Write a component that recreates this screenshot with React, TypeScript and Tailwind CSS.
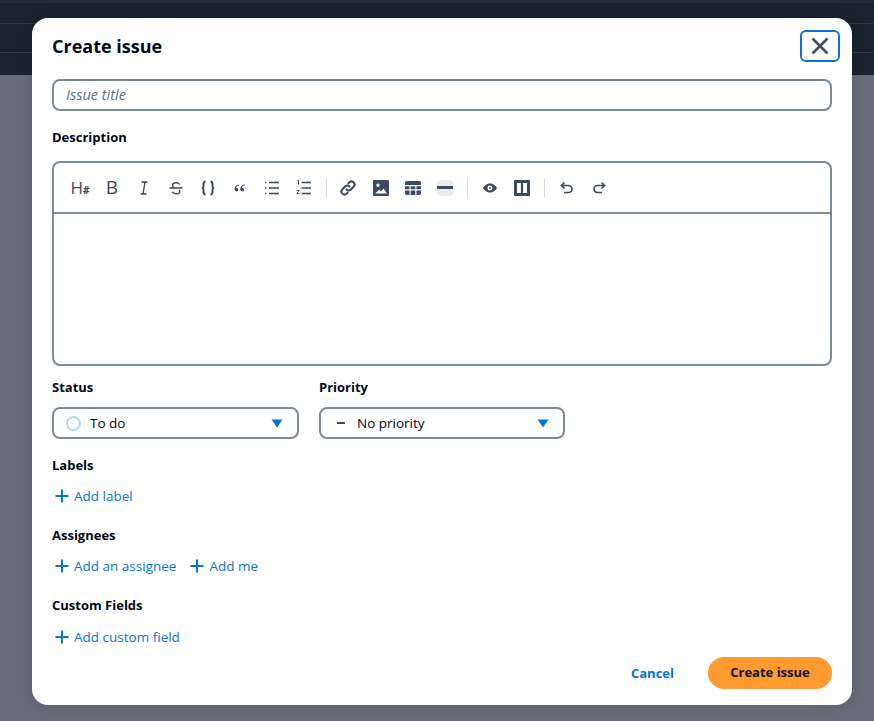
import { FC, ReactNode } from "react";

const Ic: FC<{ children: ReactNode; fill?: boolean }> = ({ children, fill }) => (
  <svg
    width="18"
    height="18"
    viewBox="0 0 18 18"
    fill={fill ? "#3b4a5c" : "none"}
    stroke={fill ? "none" : "#3b4a5c"}
    strokeWidth="1.4"
    className="shrink-0"
  >
    {children}
  </svg>
);

const Sep = () => <div className="mx-[6px] h-5 w-px shrink-0 bg-[#d5dbdb]" />;

const Btn: FC<{ children: ReactNode }> = ({ children }) => (
  <div className="flex h-[18px] w-8 items-center justify-center">{children}</div>
);

const Plus = () => (
  <svg width="16" height="16" viewBox="0 0 16 16" fill="none" stroke="#0972d3" strokeWidth="2" className="shrink-0">
    <path d="M1.500 8h13M8 1.500v13" />
  </svg>
);

const AddLink: FC<{ label: string }> = ({ label }) => (
  <span className="flex items-center gap-1 text-[13.5px] text-[#0972d3]">
    <Plus />
    {label}
  </span>
);

const Caret = () => (
  <svg width="12" height="9" viewBox="0 0 12 9" fill="#0972d3" className="shrink-0">
    <path d="M0.5 0.5h11L6 8.5z" />
  </svg>
);

const Field: FC<{ label: string; className?: string; children: ReactNode }> = ({ label, className, children }) => (
  <div className={className}>
    <div className="h-[18px] text-[13px] leading-[18px] font-bold text-[#000716]">{label}</div>
    {children}
  </div>
);

export default function App() {
  return (
    <div className="relative h-[721px] w-[874px] overflow-hidden bg-[#676d78] font-['Open_Sans','Noto_Sans',sans-serif]">
      <div className="h-[75px] border-t-[3px] border-[#232f3e] bg-[#19232f]">
        <div className="h-[21px] border-b border-[#2f3a47]" />
        <div className="h-[29px] border-b border-[#2f3a47]" />
      </div>

      <div className="absolute top-[18px] left-[32px] flex h-[687px] w-[820px] flex-col rounded-2xl bg-white px-5 shadow-[0_0_12px_rgba(0,7,22,0.15)]">
        <div className="flex h-[61px] shrink-0 items-start justify-between">
          <h2 className="mt-[15px] text-lg leading-[26px] font-bold text-[#000716]">Create issue</h2>
          <button className="mt-3 -mr-[8px] flex h-[32px] w-10 items-center justify-center rounded-md border-2 border-[#0972d3]">
            <svg width="18" height="18" viewBox="0 0 18 18" fill="none" stroke="#414d5c" strokeWidth="2.6">
              <path d="M1.500 1.500l15 15M16.500 1.500l-15 15" />
            </svg>
          </button>
        </div>

        <div className="flex h-8 shrink-0 items-center rounded-lg border-2 border-[#7d8998] px-3 text-[14.5px] text-[#5f6b7a] italic">
          Issue title
        </div>

        <Field label="Description" className="mt-[17px]">
          <div className="mt-[15px] h-[205px] rounded-lg border-2 border-[#7d8998]">
            <div className="flex h-[51px] items-center border-b-2 border-[#7d8998] pl-[10px]">
              <Btn>
                <span className="flex items-baseline text-[17px] leading-none text-[#3b4a5c]">
                  H<span className="text-[10px] font-bold">#</span>
                </span>
              </Btn>
              <Btn>
                <span className="text-[19px] leading-none text-[#3b4a5c]">B</span>
              </Btn>
              <Btn>
                <Ic>
                  <path d="M6.500 3h6M5.500 15h6M10 3L8 15" />
                </Ic>
              </Btn>
              <Btn>
                <Ic>
                  <path d="M2.500 9h13M12.800 5.500C12 4.200 10.500 3.800 9 3.800c-2 0-3.500.9-3.500 2.400 0 1 .6 1.900 1.800 2.400M12.300 11c.3.400.5.900.5 1.400 0 1.500-1.700 2.300-3.800 2.300-1.600 0-3.100-.5-3.900-1.800" />
                </Ic>
              </Btn>
              <Btn>
                <Ic>
                  <g strokeWidth="1.900">
                    <path d="M6.500 2.500C4.800 2.500 4.500 3.400 4.500 5v2.200C4.500 8.200 3.700 9 2.800 9c.9 0 1.700.8 1.700 1.800V13c0 1.600.3 2.500 2 2.500M11.500 2.500c1.700 0 2 .9 2 2.500v2.200c0 1 .8 1.800 1.700 1.800-.9 0-1.700.8-1.700 1.800V13c0 1.600-.3 2.500-2 2.500" />
                  </g>
                </Ic>
              </Btn>
              <Btn>
                <Ic fill>
                  <path d="M8.300 6.200C6.400 6.600 5.200 7.800 5 9.200c.2-.1.4-.1.6-.1 1 0 1.700.7 1.700 1.600 0 1-.7 1.700-1.700 1.700-1.200 0-2.100-1-2.100-2.500 0-2.300 1.800-4 4.500-4.500zM14 6.200c-1.900.4-3.100 1.600-3.300 3 .2-.1.4-.1.6-.1 1 0 1.700.7 1.700 1.600 0 1-.7 1.700-1.700 1.700-1.200 0-2.100-1-2.100-2.500 0-2.300 1.800-4 4.500-4.500z" />
                </Ic>
              </Btn>
              <Btn>
                <Ic>
                  <path d="M6 3.500h10M6 9h10M6 14.500h10" />
                  <path d="M2 3.500h1.500M2 9h1.500M2 14.500h1.500" strokeWidth="1.600" />
                </Ic>
              </Btn>
              <Btn>
                <Ic>
                  <path d="M6.500 3.500h9.500M6.500 9h9.500M6.500 14.500h9.500" />
                  <path d="M2.500 1.500h1v4" strokeWidth="1" />
                  <path d="M1.800 11.500h2.400l-2.400 3h2.600" strokeWidth="1" />
                </Ic>
              </Btn>
              <Sep />
              <Btn>
                <div className="-ml-[2px]">
                  <Ic>
                    <g strokeWidth="2" strokeLinecap="round">
                      <path d="M7.500 10.500a3 3 0 0 0 4.300 0l2.800-2.800a3 3 0 0 0-4.300-4.300l-1 1" />
                      <path d="M10.500 7.500a3 3 0 0 0-4.300 0l-2.800 2.800a3 3 0 0 0 4.300 4.300l1-1" />
                    </g>
                  </Ic>
                </div>
              </Btn>
              <Btn>
                <Ic fill>
                  <path fillRule="evenodd" d="M2 1h14a1 1 0 0 1 1 1v14a1 1 0 0 1-1 1H2a1 1 0 0 1-1-1V2a1 1 0 0 1 1-1zM3 14.500h12l-3.500-5-2.500 3-1.800-1.800zM6 4.500a1.700 1.700 0 1 0 0 3.400 1.700 1.700 0 0 0 0-3.400z" />
                </Ic>
              </Btn>
              <Btn>
                <Ic fill>
                  <path d="M3 2h12a2 2 0 0 1 2 2v2H1V4a2 2 0 0 1 2-2zM1 7.200h4.500v3H1zM6.700 7.200h4.600v3H6.700zM12.500 7.200H17v3h-4.500zM1 11.400h4.500V16H3a2 2 0 0 1-2-2zM6.700 11.400h4.600V16H6.700zM12.500 11.400H17V14a2 2 0 0 1-2 2h-2.500z" />
                </Ic>
              </Btn>
              <Btn>
                <div className="flex h-4 w-4 items-center rounded-sm bg-[#e9ebed]">
                  <div className="h-[3px] w-4 bg-[#3b4a5c]" />
                </div>
              </Btn>
              <Sep />
              <Btn>
                <Ic fill>
                  <path fillRule="evenodd" d="M9 4.500c3.500 0 6 2.500 7 4.500-1 2-3.500 4.500-7 4.500S3 11 2 9c1-2 3.500-4.500 7-4.500zM9 6.500a2.500 2.500 0 1 0 0 5 2.500 2.500 0 0 0 0-5zM9 8a1 1 0 1 1 0 2 1 1 0 0 1 0-2z" />
                </Ic>
              </Btn>
              <Btn>
                <Ic fill>
                  <path fillRule="evenodd" d="M2 1h14a1 1 0 0 1 1 1v14a1 1 0 0 1-1 1H2a1 1 0 0 1-1-1V2a1 1 0 0 1 1-1zM4 4v10h3.900V4zM10.100 4v10H14V4z" />
                </Ic>
              </Btn>
              <Sep />
              <Btn>
                <Ic>
                  <g strokeWidth="1.700">
                    <path d="M6.500 3.500L3.500 6.500l3 3" />
                    <path d="M3.500 6.500h7a3.500 3.500 0 0 1 0 7H6" />
                  </g>
                </Ic>
              </Btn>
              <Btn>
                <Ic>
                  <g strokeWidth="1.700">
                    <path d="M11.500 3.500l3 3-3 3" />
                    <path d="M14.500 6.500h-7a3.500 3.500 0 0 0 0 7H12" />
                  </g>
                </Ic>
              </Btn>
            </div>
          </div>
        </Field>

        <div className="mt-[12px] flex shrink-0 gap-5">
          <Field label="Status" className="w-[247px]">
            <div className="mt-[11px] flex h-8 items-center rounded-lg border-2 border-[#7d8998] pr-[14px] pl-3 text-[13.5px] text-[#000716]">
              <span className="h-[15px] w-[15px] shrink-0 rounded-full border-2 border-[#b5d6f4]" />
              <span className="ml-[9px] flex-1">To do</span>
              <Caret />
            </div>
          </Field>
          <Field label="Priority" className="w-[246px]">
            <div className="mt-[11px] flex h-8 items-center rounded-lg border-2 border-[#7d8998] pr-[14px] pl-[16px] text-[13.5px] text-[#000716]">
              <span className="h-[1.500px] w-2 shrink-0 bg-[#414d5c]" />
              <span className="ml-3 flex-1">No priority</span>
              <Caret />
            </div>
          </Field>
        </div>

        <Field label="Labels" className="mt-[17px]">
          <div className="mt-[12px] flex h-5 items-center pl-[2px]">
            <AddLink label="Add label" />
          </div>
        </Field>
        <Field label="Assignees" className="mt-[20px]">
          <div className="mt-[12px] flex h-5 items-center gap-[13px] pl-[2px]">
            <AddLink label="Add an assignee" />
            <AddLink label="Add me" />
          </div>
        </Field>
        <Field label="Custom Fields" className="mt-[20px]">
          <div className="mt-[13px] flex h-5 items-center pl-[2px]">
            <AddLink label="Add custom field" />
          </div>
        </Field>

        <div className="mt-[10px] flex shrink-0 items-center justify-end gap-[34px]">
          <span className="text-[13px] leading-[22px] font-bold text-[#0972d3]">Cancel</span>
          <button className="flex h-8 w-[124px] items-center justify-center rounded-full bg-[#ff9a2e] text-[13px] font-bold text-[#0f141a]">
            Create issue
          </button>
        </div>
      </div>
    </div>
  );
}
